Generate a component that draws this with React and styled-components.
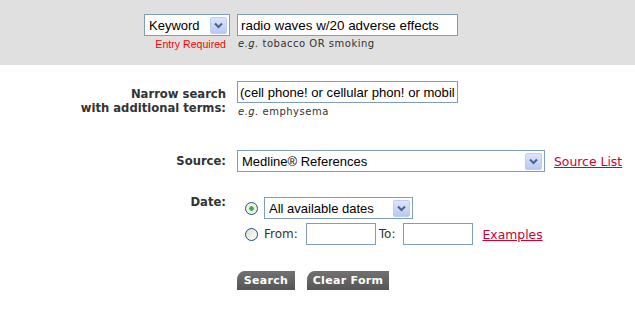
import React, { useState } from 'react';
import styled, { createGlobalStyle } from 'styled-components';

const GlobalStyle = createGlobalStyle`
    html, body {
        margin: 0;
        padding: 0;
        background: #ffffff;
    }
    body {
        font-family: 'Liberation Sans', Arial, sans-serif;
        color: #000;
    }
`;

const App = () => {
    const [keyword, setKeyword] = useState('radio waves w/20 adverse effects');
    const [narrow, setNarrow] = useState('(cell phone! or cellular phon! or mobil');
    const [dateMode, setDateMode] = useState('all');

    return (
        <Page>
            <GlobalStyle />
            <Band>
                <BandGrid>
                    <Select width={86}>
                        <SelectText>Keyword</SelectText>
                        <DropButton><Chevron /></DropButton>
                    </Select>
                    <TextInput width={221} size={13.4} value={keyword} onChange={(e) => setKeyword(e.target.value)} />
                    <Required>Entry Required</Required>
                    <Hint><em>e.g.</em> tobacco OR smoking</Hint>
                </BandGrid>
            </Band>

            <Row top={16}>
                <Label lines>
                    Narrow search
                    <br />
                    with additional terms:
                </Label>
                <Field>
                    <TextInput width={221} size={13.1} pad={2} value={narrow} onChange={(e) => setNarrow(e.target.value)} />
                    <Hint><em>e.g.</em> emphysema</Hint>
                </Field>
            </Row>

            <Row top={33} center>
                <Label>Source:</Label>
                <Inline>
                    <Select width={308}>
                        <SelectText>Medline® References</SelectText>
                        <DropButton><Chevron /></DropButton>
                    </Select>
                    <Link href="#">Source List</Link>
                </Inline>
            </Row>

            <Row top={23}>
                <Label>Date:</Label>
                <DateBox>
                    <Inline>
                        <Radio checked={dateMode === 'all'} onClick={() => setDateMode('all')} />
                        <Select width={149}>
                            <SelectText>All available dates</SelectText>
                            <DropButton><Chevron /></DropButton>
                        </Select>
                    </Inline>
                    <Inline>
                        <Radio checked={dateMode === 'range'} onClick={() => setDateMode('range')} />
                        <SmallLabel>From:</SmallLabel>
                        <TextInput width={70} size={13} />
                        <SmallLabel>To:</SmallLabel>
                        <TextInput width={70} size={13} />
                        <Link href="#">Examples</Link>
                    </Inline>
                </DateBox>
            </Row>

            <Row top={26}>
                <span />
                <Buttons>
                    <TabButton width={58}>Search</TabButton>
                    <TabButton width={82}>Clear Form</TabButton>
                </Buttons>
            </Row>
        </Page>
    );
};

const Chevron = () => (
    <svg width="9" height="7" viewBox="0 0 9 7">
        <path d="M1 1.5 L4.5 5 L8 1.5" fill="none" stroke="#4d6185" strokeWidth="2" />
    </svg>
);

export default App;

// Styled Components
const Page = styled.div`
    width: 635px;
    height: 316px;
    overflow: hidden;
`;

const Band = styled.div`
    background: #e0e0e0;
    height: 65px;
    padding-top: 14px;
    box-sizing: border-box;
`;

const BandGrid = styled.div`
    display: grid;
    grid-template-columns: 230px auto;
    column-gap: 7px;
    row-gap: 2px;
    justify-content: start;
    justify-items: start;

    & > *:nth-child(odd) {
        justify-self: end;
    }
`;

const Row = styled.div`
    display: grid;
    grid-template-columns: 226px auto;
    column-gap: 11px;
    margin-top: ${(p) => p.top}px;
    align-items: ${(p) => (p.center ? 'center' : 'start')};
`;

const Label = styled.div`
    font-family: 'DejaVu Sans', Verdana, sans-serif;
    font-weight: bold;
    font-size: 11.6px;
    line-height: 14px;
    color: #333;
    text-align: right;
    padding-top: ${(p) => (p.lines ? 6 : 0)}px;
`;

const Field = styled.div`
    display: flex;
    flex-direction: column;
    gap: 3px;
`;

const Inline = styled.div`
    display: flex;
    align-items: center;
    gap: 6px;
`;

const DateBox = styled.div`
    display: flex;
    flex-direction: column;
    gap: 4px;
    padding-top: 2px;
    padding-left: 8px;

    span + input {
        margin-left: 2px;
    }
    input + span {
        margin-left: -3px;
    }
`;

const Select = styled.div`
    width: ${(p) => p.width}px;
    height: 22px;
    box-sizing: border-box;
    border: 1px solid #7f9db9;
    background: #fff;
    display: flex;
    align-items: center;
    justify-content: space-between;
    padding: 0 2px 0 4px;
`;

const SelectText = styled.span`
    font-family: 'Liberation Sans', Arial, sans-serif;
    font-size: 13px;
    color: #000;
    white-space: nowrap;
`;

const DropButton = styled.span`
    width: 17px;
    height: 17px;
    box-sizing: border-box;
    border: 1px solid #b9cdf5;
    border-radius: 2px;
    background: linear-gradient(#dce6fb, #b6c9f5);
    display: flex;
    align-items: center;
    justify-content: center;
`;

const TextInput = styled.input`
    width: ${(p) => p.width}px;
    height: 22px;
    box-sizing: border-box;
    border: 1px solid #7f9db9;
    background: #fff;
    padding: 0 ${(p) => p.pad ?? 3}px;
    font-family: 'Liberation Sans', Arial, sans-serif;
    font-size: ${(p) => p.size}px;
    color: #000;
    outline: none;
`;

const Required = styled.span`
    font-family: 'Liberation Sans', Arial, sans-serif;
    font-size: 10.6px;
    color: #ff0000;
    padding-right: 4px;
`;

const Hint = styled.span`
    font-family: 'DejaVu Sans', Verdana, sans-serif;
    font-size: 10px;
    letter-spacing: 0.5px;
    color: #333;
    padding-left: 1px;

    em {
        font-style: italic;
    }
`;

const Link = styled.a`
    font-family: 'DejaVu Sans', Verdana, sans-serif;
    font-size: 12.4px;
    color: #cc0033;
    text-decoration: underline;
    margin-left: 3px;
`;

const SmallLabel = styled.span`
    font-family: 'DejaVu Sans', Verdana, sans-serif;
    font-size: 12px;
    color: #333;
`;

const Radio = styled.span`
    width: 13px;
    height: 13px;
    box-sizing: border-box;
    border-radius: 50%;
    border: 1px solid #1c5180;
    background: ${(p) =>
        p.checked
            ? 'radial-gradient(circle, #3cb432 0 2px, #e8efe6 2.5px, #f7f7f3 100%)'
            : 'linear-gradient(135deg, #dcdcd7, #ffffff)'};
    flex: none;
    cursor: pointer;
`;

const Buttons = styled.div`
    display: flex;
    gap: 12px;
`;

const TabButton = styled.button`
    font-family: 'DejaVu Sans', Verdana, sans-serif;
    font-weight: bold;
    font-size: 11px;
    letter-spacing: 0.3px;
    color: #fff;
    background: linear-gradient(#727272, #555555);
    border: none;
    border-top-left-radius: 7px 9px;
    width: ${(p) => p.width}px;
    height: 19px;
    padding: 0;
    text-align: center;
    cursor: pointer;
`;
